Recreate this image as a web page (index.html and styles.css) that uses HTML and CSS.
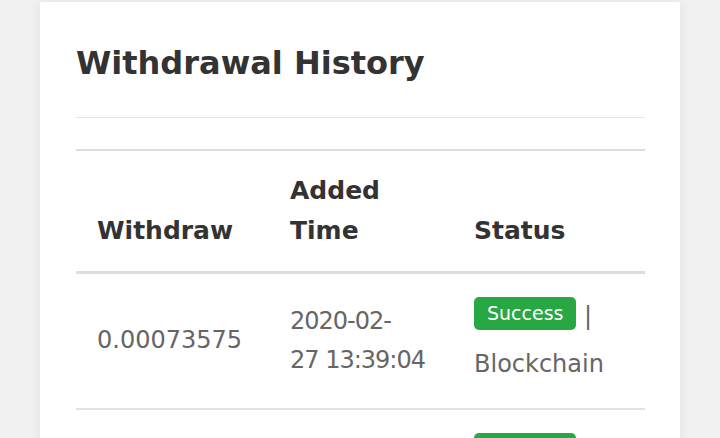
FILE: index.html
```html
<!DOCTYPE html>
<html lang="en">
<head>
  <meta charset="UTF-8">
  <meta name="viewport" content="width=device-width, initial-scale=1.0">
  <title>Withdrawal History</title>
  <link rel="stylesheet" href="styles.css">
</head>
<body>
  <div class="card">
    <div class="card-header">
      <h1>Withdrawal History</h1>
    </div>

    <table class="history">
      <thead>
        <tr>
          <th class="col-amount">Withdraw</th>
          <th class="col-time">Added Time</th>
          <th class="col-status">Status</th>
        </tr>
      </thead>
      <tbody>
        <tr>
          <td>0.00073575</td>
          <td class="time">2020-02-<br>27 13:39:04</td>
          <td><span class="badge">Success</span> | Blockchain</td>
        </tr>
        <tr>
          <td>0.00051200</td>
          <td class="time">2020-02-<br>21 09:12:47</td>
          <td><span class="badge">Success</span> | Blockchain</td>
        </tr>
      </tbody>
    </table>
  </div>
</body>
</html>
```

FILE: styles.css
```css
body {
  margin: 0;
  padding-top: 2px;
  background-color: #f1f1f1;
  font-family: "DejaVu Sans", sans-serif;
  color: #666;
}

.card {
  margin: 0 40px;
  padding: 0 35px 40px 36px;
  background-color: #fff;
  box-shadow: 0 0 12px rgba(0, 0, 0, 0.07);
}

.card-header {
  padding: 36px 0 29px;
  border-bottom: 1px solid #e6e6e6;
}

h1 {
  margin: 0;
  font-size: 32px;
  line-height: 50px;
  font-weight: bold;
  color: #333;
}

.history {
  width: 100%;
  margin-top: 31px;
  table-layout: fixed;
  border-collapse: collapse;
  border-top: 2px solid #ddd;
}

.history th {
  padding: 20px 21px 20px;
  text-align: left;
  vertical-align: bottom;
  font-size: 25px;
  line-height: 40px;
  color: #333;
  border-bottom: 3px solid #ddd;
}

.col-amount { width: 151px; }
.col-time { width: 142px; }

.history td {
  padding: 23px 21px 24px;
  vertical-align: middle;
  font-size: 24px;
  line-height: 39px;
  border-bottom: 2px solid #e2e2e2;
}

.history td.time {
  letter-spacing: -1px;
}

.badge {
  display: inline-block;
  padding: 0 13px;
  line-height: 33px;
  margin-bottom: 15px;
  border-radius: 5px;
  background-color: #28a745;
  color: #fff;
  font-size: 19px;
  letter-spacing: 0;
  vertical-align: top;
}
```
